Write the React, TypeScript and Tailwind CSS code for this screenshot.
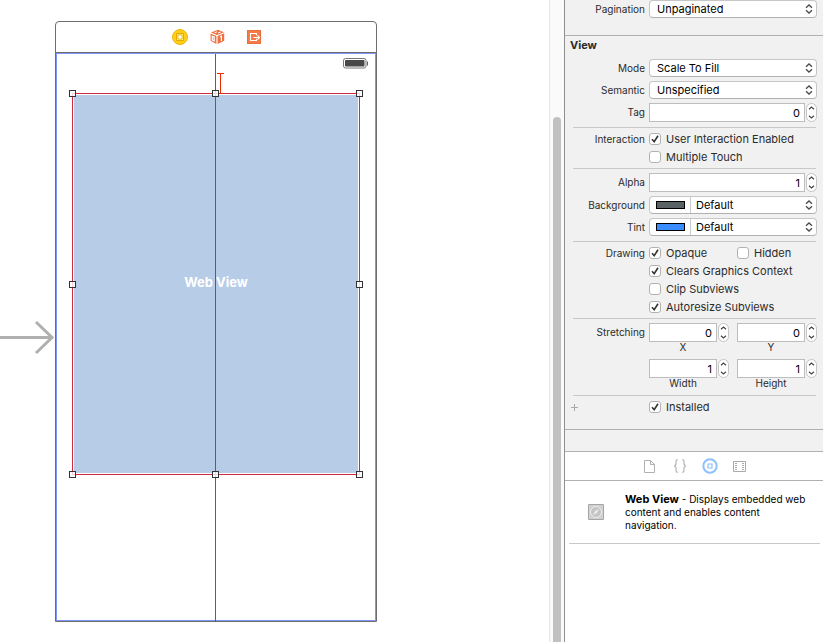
import type { ReactNode } from "react";

function Chevrons() {
  return (
    <svg className="pointer-events-none absolute right-[3px] top-[3px] h-2.5 w-2" viewBox="0 0 8 10" fill="none" stroke="#4a4a4a" strokeWidth="1.3">
      <path d="M1 3.8 4 1l3 2.8M1 6.2 4 9l3-2.8" />
    </svg>
  );
}

function Row({ label, htmlFor, children }: { label?: string; htmlFor?: string; children: ReactNode }) {
  return (
    <div className="grid grid-cols-[72px_1fr] gap-1">
      {label && htmlFor ? (
        <label htmlFor={htmlFor} className="text-right text-[10px] leading-[19px]">{label}</label>
      ) : (
        <span className="text-right text-[10px] leading-[19px]">{label}</span>
      )}
      {children}
    </div>
  );
}

function SelectRow({ label, value, swatch }: { label: string; value: string; swatch?: "gray" | "blue" }) {
  const id = label.toLowerCase();
  return (
    <div className="h-[18px]">
      <Row label={label} htmlFor={id}>
        <div className="relative flex h-[18px] overflow-hidden rounded-[4px] border border-[#c6c6c6] border-b-[#b0b0b0] bg-white">
          {swatch && (
            <span className="flex w-[41px] shrink-0 items-center justify-center border-r border-[#c9c9c9]">
              <span className={swatch === "gray" ? "h-2 w-[29px] border border-black bg-[#5a6265]" : "h-2 w-[29px] border border-black bg-[#3a8cff]"} />
            </span>
          )}
          <select id={id} className={swatch ? "min-w-0 flex-1 appearance-none bg-transparent pl-[5px] text-[11px] leading-4 text-black" : "min-w-0 flex-1 appearance-none bg-transparent pl-[7px] text-[11px] leading-4 text-black"}>
            <option>{value}</option>
          </select>
          <Chevrons />
        </div>
      </Row>
    </div>
  );
}

function NumberBox({ id, value }: { id: string; value: string }) {
  return (
    <div className="flex h-[19px] min-w-0 flex-1 gap-px">
      <input id={id} defaultValue={value} className="w-0 min-w-0 flex-1 border border-[#bdbdbd] bg-white pr-1 pt-0.5 text-right text-[11px] text-black" />
      <div className="flex w-[11px] shrink-0 flex-col overflow-hidden rounded-full border border-[#c4c4c4] bg-white">
        <button aria-label={"Increase " + id} className="flex flex-1 items-center justify-center">
          <svg className="h-1 w-[7px]" viewBox="0 0 7 4" fill="none" stroke="#444" strokeWidth="1.2"><path d="M1 3.2 3.5 1 6 3.2" /></svg>
        </button>
        <button aria-label={"Decrease " + id} className="flex flex-1 items-center justify-center">
          <svg className="h-1 w-[7px]" viewBox="0 0 7 4" fill="none" stroke="#444" strokeWidth="1.2"><path d="M1 .8 3.5 3 6 .8" /></svg>
        </button>
      </div>
    </div>
  );
}

function CaptionedBox({ name, value }: { name: string; value: string }) {
  const id = name.toLowerCase();
  return (
    <div className="min-w-0 flex-1 pb-0.5">
      <NumberBox id={id} value={value} />
      <label htmlFor={id} className="block pr-3 text-center text-[10px] leading-[10px]">{name}</label>
    </div>
  );
}

function Check({ label, checked }: { label: string; checked?: boolean }) {
  return (
    <label className="flex h-[18px] flex-1 items-center gap-[5px] whitespace-nowrap">
      <span className="relative flex size-3">
        <input type="checkbox" defaultChecked={checked} className="peer size-3 appearance-none rounded-[3px] border border-[#b2b2b2] bg-white" />
        <svg className="pointer-events-none absolute inset-0 hidden size-3 peer-checked:block" viewBox="0 0 12 12" fill="none" stroke="#333" strokeWidth="1.6">
          <path d="M3 6.2 5.2 8.7 9 2.8" />
        </svg>
      </span>
      {label}
    </label>
  );
}

function CheckRow({ label, children }: { label?: string; children: ReactNode }) {
  return (
    <div className="h-[18px]">
      <Row label={label}>{children}</Row>
    </div>
  );
}

function Rule() {
  return <hr className="mr-px border-t border-[#c8c8c8]" />;
}

function Handles({ row }: { row: "top" | "middle" | "bottom" }) {
  const box = "absolute size-[7px] border border-[#333] bg-white/80";
  const y = row === "top" ? "-top-1" : row === "middle" ? "top-[187px]" : "-bottom-1";
  return (
    <>
      <i className={`${box} ${y} -left-1`} />
      {row !== "middle" && <i className={`${box} ${y} left-[139px]`} />}
      <i className={`${box} ${y} -right-1`} />
    </>
  );
}

function SceneDock() {
  return (
    <div className="flex h-[31px] items-center justify-center gap-[22px] border-b border-[#6e6e6e]">
      <svg className="size-4" viewBox="0 0 16 16">
        <circle cx="8" cy="8" r="7.5" fill="#fcd116" stroke="#f1b114" />
        <path d="M4.5 4.5h7v7h-7z" fill="#fff08a" stroke="#e9a800" />
        <path d="M6 6h4v4H6z" fill="#fff" stroke="#e9a800" strokeWidth=".8" />
      </svg>
      <svg className="h-4 w-[15px]" viewBox="0 0 15 16">
        <path d="m1 3.4 7-2.6 6 2.4-7 2.8zM.6 4.6 6.4 7v8L.6 11.8zM7.6 7l6.6-2.7v7.4L7.6 15z" fill="#f0703f" />
        <path d="M4.6 3.7 7 2.8M8 4l2.6-1" stroke="#fff" strokeWidth="1" />
        <path d="M2.3 7.2 4.2 8v3.8L2.3 11zM10.1 8.1l1.3-1v4.8" fill="none" stroke="#fff" strokeWidth="1.2" />
      </svg>
      <svg className="size-3.5" viewBox="0 0 14 14" fill="none">
        <path d="M0 0h14v14H0z" fill="#f47a46" />
        <path d="M.5.5h13v13H.5z" stroke="#e9703c" />
        <path d="M9.5 5.2V3.5h-6v7h6V8.8M6.5 7.5h5.6M10.5 5.3l2 2.2-2 2.2" stroke="#fff" strokeWidth="1.1" />
      </svg>
    </div>
  );
}

function Canvas() {
  return (
    <main className="flex min-w-0 flex-1 items-start">
      <svg className="mt-[320px] h-[35px] w-[55px] shrink-0" viewBox="0 0 55 35" fill="none" stroke="#b0b0b0" strokeWidth="3">
        <path d="M0 17.5h51M36 2l16 15.5L36 33" />
      </svg>
      <section className="mt-[21px] w-[322px] shrink-0 rounded-t-[4px] border border-[#6e6e6e] bg-white">
        <SceneDock />
        <div className="relative h-[568px] border border-[#8095f5] px-[15px]">
          <div className="flex h-[39px] justify-end pt-1">
            <svg className="-mr-[9px] h-[11px] w-[26px]" viewBox="0 0 26 11" fill="none">
              <rect x=".5" y=".5" width="22.5" height="9.5" rx="2" stroke="#777" />
              <rect x="2" y="2" width="19.5" height="6.5" rx=".8" fill="#484848" />
              <path d="M24.5 3.5v4" stroke="#666" />
            </svg>
          </div>
          <div className="relative h-[382px] border border-[#d0283c] p-px">
            <div className="flex h-full items-center justify-center bg-[#b7cce7] pb-0.5 text-[13px] font-bold text-white">
              Web View
            </div>
            <i className="absolute -top-10 left-[142px] h-[568px] w-px bg-[#e02c14]" />
            <svg className="absolute left-36 -top-[21px] h-[21px] w-[7px]" viewBox="0 0 7 21" stroke="#f02800">
              <path d="M0 .5h7M0 20.5h7M3.5 0v21" />
            </svg>
            <Handles row="top" />
            <Handles row="middle" />
            <Handles row="bottom" />
          </div>
        </div>
      </section>
    </main>
  );
}

function Library() {
  return (
    <section className="flex-1 bg-white">
      <nav className="flex h-[30px] items-center justify-center gap-3.5 border-y border-[#b0b0b0] pl-px">
        <button aria-label="File templates" className="flex size-4 items-center justify-center">
          <svg className="h-[13px] w-[11px]" viewBox="0 0 11 13" fill="none" stroke="#b0b0b0"><path d="M.5.5h6l4 4v8H.5zM6.5.5v4h4" /></svg>
        </button>
        <button aria-label="Code snippets" className="flex size-4 items-center justify-center">
          <svg className="h-3.5 w-3" viewBox="0 0 12 14" fill="none" stroke="#b0b0b0" strokeWidth="1.1"><path d="M4 .7H3L2 2v3.5L.6 7 2 8.5V12l1 1.3h1M8 .7h1L10 2v3.5L11.4 7 10 8.5V12l-1 1.3H8" /></svg>
        </button>
        <button aria-label="Objects" className="flex size-4 items-center justify-center">
          <svg className="size-4 shrink-0" viewBox="0 0 16 16" fill="none" stroke="#8cc1fa"><circle cx="8" cy="8" r="6.7" strokeWidth="2" /><path d="M6 6h4v4H6z" strokeWidth="1.2" /></svg>
        </button>
        <button aria-label="Media" className="flex size-4 items-center justify-center">
          <svg className="h-[11px] w-[13px]" viewBox="0 0 13 11" fill="none" stroke="#aaa">
            <path d="M.5.5h12v10H.5z" />
            <path d="M2 2.5h2M2 4.5h2M2 6.5h2M2 8.5h2M9 2.5h2M9 4.5h2M9 6.5h2M9 8.5h2" />
          </svg>
        </button>
      </nav>
      <article className="ml-1 mr-[3px] flex border-b border-[#c8c8c8] pb-[11px] pl-[19px] pr-2.5 pt-3">
        <svg className="mt-[11px] size-4 shrink-0" viewBox="0 0 16 16" fill="none">
          <path d="M.5.5h15v15H.5z" fill="#d0d0d0" stroke="#a6a6a6" />
          <circle cx="8" cy="8" r="5.5" fill="#c4c4c4" stroke="#eee" />
          <path d="m5 11 2.2-4L11 5 8.8 9z" fill="#eee" />
        </svg>
        <p className="ml-[21px] text-[10px] leading-[13px] text-black">
          <b className="text-[11px] leading-none">Web View</b> - Displays embedded web content and enables content navigation.
        </p>
      </article>
    </section>
  );
}

export default function App() {
  return (
    <div className="flex min-h-screen overflow-hidden bg-white font-[Inter,sans-serif] text-[11px] text-[#2b2b2b]">
      <Canvas />
      <div className="flex w-[15px] shrink-0 justify-center border-l border-[#e6e6e6] bg-[#fafafa] pt-[117px]">
        <div className="w-2 rounded-t-full bg-[#c1c1c1]" />
      </div>
      <aside className="flex w-[259px] shrink-0 flex-col border-l border-[#8f8f8f] bg-[#f1f1f1]">
        <section className="pb-[17px] pl-2 pr-1.5">
          <SelectRow label="Pagination" value="Unpaginated" />
        </section>
        <section className="border-y border-[#b0b0b0] pb-[13px] pl-2 pr-1.5">
          <h2 className="-ml-[3px] h-[23px] font-bold leading-[18px]">View</h2>
          <div className="flex flex-col gap-1 pb-[5px]">
            <SelectRow label="Mode" value="Scale To Fill" />
            <SelectRow label="Semantic" value="Unspecified" />
            <Row label="Tag" htmlFor="tag"><NumberBox id="tag" value="0" /></Row>
          </div>
          <Rule />
          <div className="py-0.5">
            <CheckRow label="Interaction"><Check label="User Interaction Enabled" checked /></CheckRow>
            <CheckRow><Check label="Multiple Touch" /></CheckRow>
          </div>
          <Rule />
          <div className="flex flex-col gap-1 pb-[5px] pt-1">
            <Row label="Alpha" htmlFor="alpha"><NumberBox id="alpha" value="1" /></Row>
            <SelectRow label="Background" value="Default" swatch="gray" />
            <SelectRow label="Tint" value="Default" swatch="blue" />
          </div>
          <Rule />
          <div className="py-0.5">
            <CheckRow label="Drawing">
              <div className="flex gap-2"><Check label="Opaque" checked /><Check label="Hidden" /></div>
            </CheckRow>
            <CheckRow><Check label="Clears Graphics Context" checked /></CheckRow>
            <CheckRow><Check label="Clip Subviews" /></CheckRow>
            <CheckRow><Check label="Autoresize Subviews" checked /></CheckRow>
          </div>
          <Rule />
          <div className="flex flex-col gap-[5px] pb-[5px] pt-1">
            <Row label="Stretching">
              <div className="flex gap-2"><CaptionedBox name="X" value="0" /><CaptionedBox name="Y" value="0" /></div>
            </Row>
            <Row>
              <div className="flex gap-2"><CaptionedBox name="Width" value="1" /><CaptionedBox name="Height" value="1" /></div>
            </Row>
          </div>
          <Rule />
          <div className="grid grid-cols-[72px_1fr] gap-1 pt-0.5">
            <button aria-label="Add variation" className="-ml-0.5 flex items-center">
              <svg className="size-[7px]" viewBox="0 0 7 7" stroke="#aaa"><path d="M0 3.5h7M3.5 0v7" /></svg>
            </button>
            <Check label="Installed" checked />
          </div>
        </section>
        <div className="h-[21px]" />
        <Library />
      </aside>
    </div>
  );
}
